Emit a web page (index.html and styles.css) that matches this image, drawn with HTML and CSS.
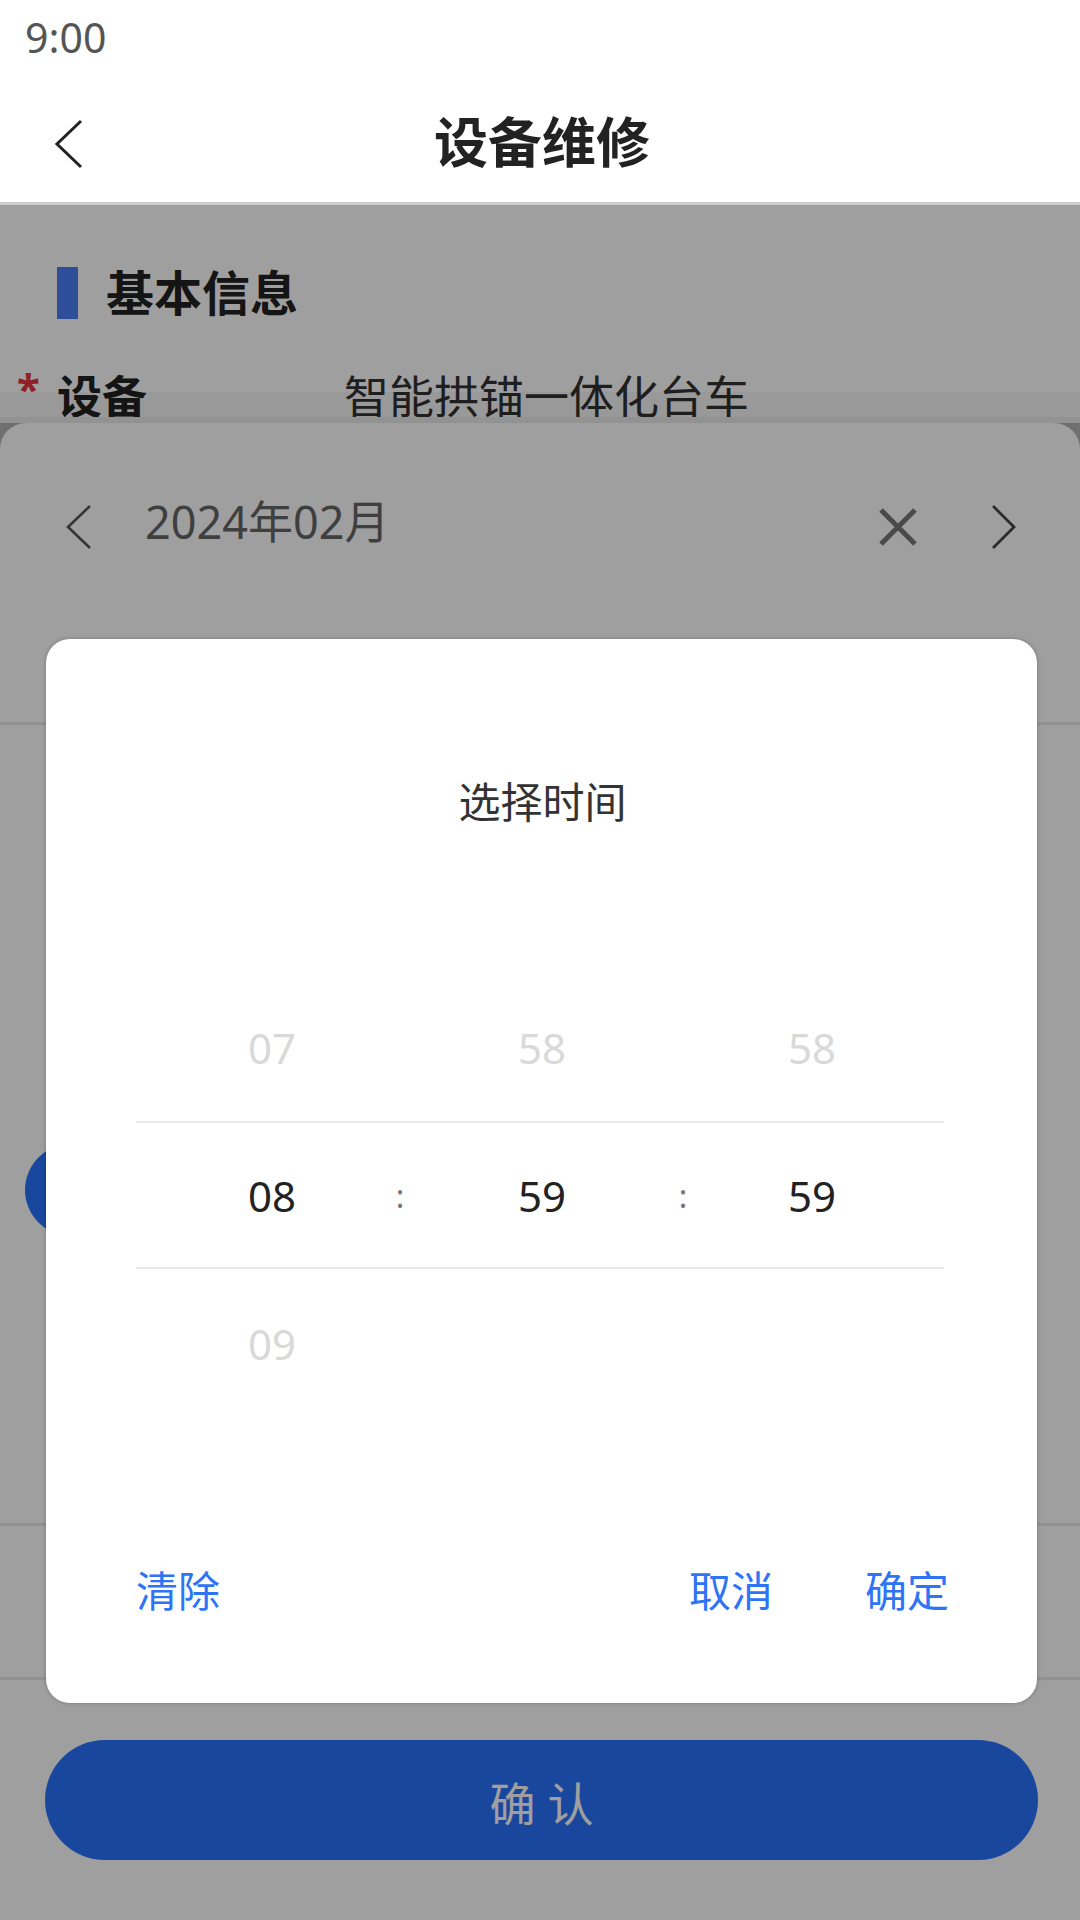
FILE: index.html
```html
<!DOCTYPE html>
<html lang="zh-CN">
<head>
<meta charset="utf-8">
<title>设备维修</title>
<link rel="stylesheet" href="styles.css">
</head>
<body>
<div class="screen">
  <header class="topbar">
    <div class="status">9:00</div>
    <div class="nav">
      <svg class="nav-back" viewBox="0 0 30 50" width="30" height="50"><path d="M27 2 L3 25 L27 48" fill="none" stroke="#222" stroke-width="3" stroke-linejoin="miter"/></svg>
      <h1 class="nav-title">设备维修</h1>
      <span></span>
    </div>
  </header>
  <main class="content">
    <div class="section-title"><span class="bar"></span><span class="section-text">基本信息</span></div>
    <div class="form-row"><span class="req">*</span><span class="label">设备</span><span class="value">智能拱锚一体化台车</span></div>

    <div class="cal-popup">
      <div class="cal-frame">
        <div class="cal-sheet">
          <div class="cal-head">
            <svg class="cal-prev" viewBox="0 0 28 46" width="28" height="46"><path d="M25 2 L3 23 L25 44" fill="none" stroke="#555" stroke-width="2.6"/></svg>
            <span class="cal-month">2024年02月</span>
            <svg class="cal-close" viewBox="0 0 40 40" width="40" height="40"><path d="M3 3 L37 37 M37 3 L3 37" fill="none" stroke="#777" stroke-width="5"/></svg>
            <svg class="cal-next" viewBox="0 0 26 46" width="26" height="46"><path d="M3 2 L24 23 L3 44" fill="none" stroke="#444" stroke-width="2.8"/></svg>
          </div>
          <div class="cal-week"></div>
          <div class="cal-body">
            <div class="cal-days"><span class="day-selected">8</span></div>
          </div>
          <div class="cal-time"></div>
          <div class="cal-foot"><button class="confirm">确 认</button></div>
        </div>
      </div>
    </div>

    <div class="mask">
      <div class="dialog">
        <div class="dialog-title">选择时间</div>
        <div class="picker">
          <div class="picker-row"><span class="cell c1"></span><span class="sep"></span><span class="cell c2"></span><span class="sep"></span><span class="cell c3"></span></div>
          <div class="picker-row faded"><span class="cell c1">07</span><span class="sep"></span><span class="cell c2">58</span><span class="sep"></span><span class="cell c3">58</span></div>
          <div class="picker-row active"><span class="cell c1">08</span><span class="sep">:</span><span class="cell c2">59</span><span class="sep">:</span><span class="cell c3">59</span></div>
          <div class="picker-row faded"><span class="cell c1">09</span><span class="sep"></span><span class="cell c2"></span><span class="sep"></span><span class="cell c3"></span></div>
          <div class="picker-row"><span class="cell c1"></span><span class="sep"></span><span class="cell c2"></span><span class="sep"></span><span class="cell c3"></span></div>
        </div>
        <div class="dialog-actions">
          <span class="action">清除</span>
          <span class="action-group"><span class="action">取消</span><span class="action">确定</span></span>
        </div>
      </div>
    </div>
  </main>
</div>
</body>
</html>
```
FILE: styles.css
```css
* { box-sizing: border-box; }
html, body { margin: 0; padding: 0; }
body { width: 1080px; height: 1920px; overflow: hidden; }

.screen {
  width: 1080px;
  height: 1920px;
  display: flex;
  flex-direction: column;
  background: #fff;
  font-family: "Noto Sans", "Noto Sans CJK SC", sans-serif;
  color: #333;
}

/* header */
.topbar {
  background: #fff;
  border-bottom: 3px solid #cccccc;
  flex: none;
}
.status {
  height: 74px;
  line-height: 74px;
  padding-left: 25px;
  font-size: 41px;
  color: #555;
}
.nav {
  height: 128px;
  display: grid;
  grid-template-columns: 1fr auto 1fr;
  align-items: center;
  padding-left: 54px;
}
.nav-back { display: block; margin-top: 12px; }
.nav-title {
  margin: 0;
  font-size: 54px;
  font-weight: 700;
  color: #222;
  line-height: 64px;
  margin-top: 8px;
  margin-left: -50px;
}

/* page content */
.content {
  position: relative;
  flex: 1;
  overflow: hidden;
  background: #fff;
}
.section-title {
  display: flex;
  align-items: center;
  height: 52px;
  margin-top: 62px;
  padding-left: 57px;
}
.bar {
  width: 21px;
  height: 52px;
  background: #4a7ef5;
  margin-right: 28px;
}
.section-text {
  font-size: 48px;
  font-weight: 700;
  color: #222;
  line-height: 52px;
}
.form-row {
  display: flex;
  align-items: center;
  height: 60px;
  margin-top: 45px;
  padding-left: 17px;
  font-size: 45px;
  color: #333;
}
.req {
  width: 40px;
  color: #e8333f;
  font-size: 42px;
  font-weight: 700;
  align-self: flex-start;
  line-height: 48px;
}
.label {
  width: 287px;
  font-weight: 700;
  color: #222;
}
.value { color: #333; }

/* calendar popup (beneath dialog) */
.cal-popup {
  position: absolute;
  left: 0;
  right: 0;
  top: 187px;
  bottom: 0;
  background: rgba(0, 0, 0, 0.04);
  padding-top: 25px;
  display: flex;
  flex-direction: column;
}
.cal-frame {
  flex: 1;
  border-top: 6px solid #ebebeb;
  background: #b2b2b2;
  display: flex;
  flex-direction: column;
}
.cal-sheet {
  flex: 1;
  background: #fff;
  border-radius: 26px 26px 0 0;
  display: flex;
  flex-direction: column;
}
.cal-head {
  height: 208px;
  display: flex;
  align-items: center;
  padding: 0 64px 0 65px;
}
.cal-prev, .cal-close, .cal-next { display: block; flex: none; }
.cal-month {
  margin-left: 52px;
  font-size: 45px;
  color: #666;
  margin-top: -16px;
}
.cal-close { margin-left: auto; }
.cal-next { margin-left: 72px; }
.cal-week {
  height: 94px;
  border-bottom: 3px solid #ebebeb;
}
.cal-body {
  height: 801px;
  border-bottom: 3px solid #ebebeb;
}
.cal-days {
  padding: 419px 0 0 25px;
}
.day-selected {
  display: flex;
  align-items: center;
  justify-content: center;
  width: 92px;
  height: 92px;
  border-radius: 50%;
  background: #2b73fd;
  color: #fff;
  font-size: 40px;
}
.cal-time {
  height: 154px;
  border-bottom: 3px solid #ebebeb;
}
.cal-foot {
  padding: 60px 42px 0 45px;
}
.confirm {
  display: block;
  width: 993px;
  height: 120px;
  border: none;
  border-radius: 60px;
  background: #2b73fd;
  color: #fff;
  font-family: "Noto Sans", "Noto Sans CJK SC", sans-serif;
  font-size: 46px;
  padding-top: 2px;
}

/* modal mask + dialog */
.mask {
  position: absolute;
  inset: 0;
  background: rgba(0, 0, 0, 0.376);
  padding: 434px 0 0 46px;
}
.dialog {
  width: 991px;
  height: 1064px;
  background: #fff;
  border-radius: 24px;
  box-shadow: 0 0 4px rgba(0, 0, 0, 0.25);
  padding: 143px 88px 0 90px;
}
.dialog-title {
  height: 43px;
  line-height: 40px;
  text-align: center;
  font-size: 42px;
  color: #333;
}
.picker { width: 808px; }
.picker-row {
  display: grid;
  grid-template-columns: 250px 28px 256px 26px 248px;
  align-items: center;
  height: 148px;
  font-size: 42px;
  color: #222;
}
.picker-row.faded { color: #d9d9d9; }
.picker-row.active {
  border-top: 2px solid #e8e8e8;
  border-bottom: 2px solid #e8e8e8;
}
.cell { text-align: center; }
.c1 { padding-left: 22px; }
.c3 { padding-right: 16px; }
.sep {
  text-align: center;
  font-size: 32px;
  color: #777;
}
.dialog-actions {
  width: 813px;
  height: 46px;
  display: flex;
  align-items: center;
  justify-content: space-between;
  font-size: 42px;
  color: #2f74f5;
}
.action-group {
  display: flex;
  gap: 92px;
}
```
